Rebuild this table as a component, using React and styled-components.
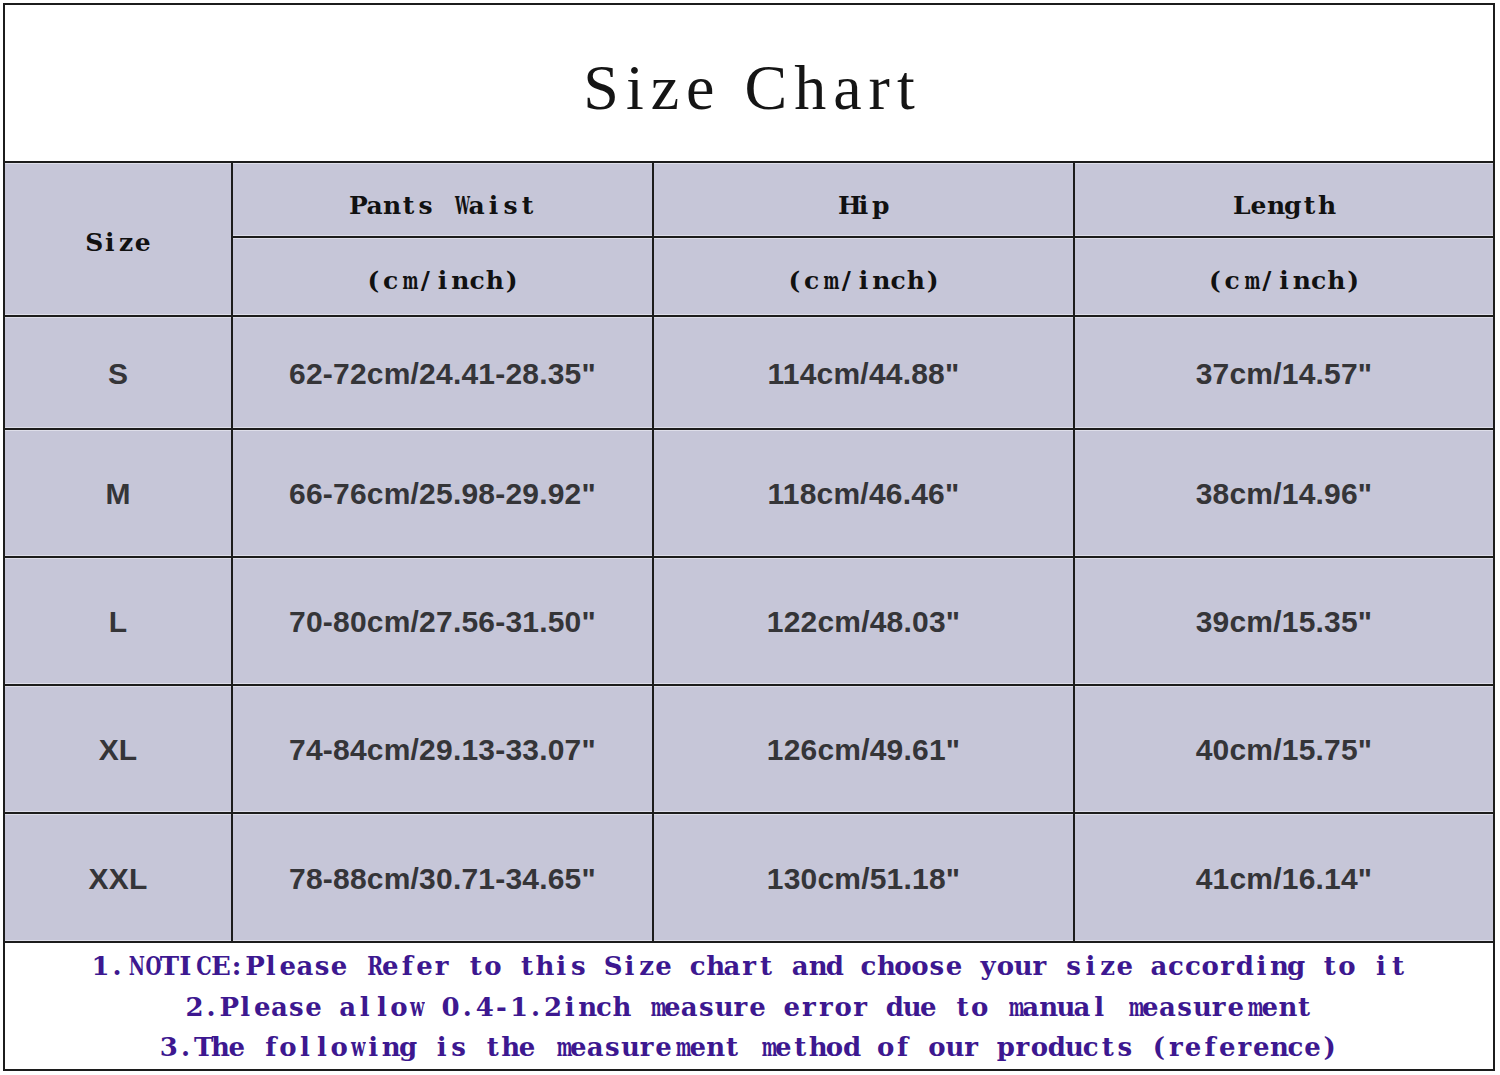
import React from "react";
import styled, { createGlobalStyle } from "styled-components";

const GlobalStyle = createGlobalStyle`
  html, body {
    margin: 0;
    padding: 0;
    background: #ffffff;
  }
`;

const Page = styled.div`
  padding: 3px 0 0 3px;
  width: 1500px;
  height: 1075px;
  box-sizing: border-box;
  background: #ffffff;
`;

const Sheet = styled.div`
  width: 1492px;
  height: 1068px;
  box-sizing: border-box;
  border: 2px solid #1c1c1c;
  display: flex;
  flex-direction: column;
`;

const TitleBar = styled.div`
  height: 158px;
  box-sizing: border-box;
  border-bottom: 2px solid #1c1c1c;
  display: flex;
  align-items: center;
  justify-content: center;
  padding-top: 10px;
`;

const Title = styled.h1`
  margin: 0 -7px 0 0;
  font-family: "Liberation Serif", "Times New Roman", serif;
  font-weight: 400;
  font-size: 64px;
  line-height: 1;
  letter-spacing: 7px;
  color: #151515;
`;

const Grid = styled.div`
  display: grid;
  grid-template-columns: 228px 421px 421px 1fr;
  grid-template-rows: 75px 79px 113px 128px 128px 128px 129px;
`;

const Cell = styled.div`
  box-sizing: border-box;
  background: #c6c6d8;
  border-bottom: 2px solid #1c1c1c;
  border-right: ${(p) => (p.$last ? "none" : "2px solid #1c1c1c")};
  box-shadow: inset 0 1px 0 #dedee9, inset 0 -1px 0 #dedee9;
  grid-row: ${(p) => p.$rows || "auto"};
  display: flex;
  align-items: center;
  justify-content: center;
  padding-top: ${(p) => p.$nudge || 0}px;
`;

const HeadText = styled.span`
  font-family: "DejaVu Serif", "Liberation Serif", serif;
  font-weight: 700;
  font-size: 25px;
  line-height: 1;
  color: #111111;
  white-space: nowrap;
`;

const DataText = styled.span`
  font-family: "Liberation Sans", Arial, sans-serif;
  font-weight: 700;
  font-size: 30px;
  line-height: 1;
  letter-spacing: 0.2px;
  color: #353538;
`;

// one fixed-width slot per character, like the half-width latin of the original font
const Ch = styled.span`
  display: inline-block;
  width: ${(p) => p.$w}px;
  text-align: center;
  transform: scaleX(${(p) => p.$sx});
`;

const Footer = styled.div`
  flex: 1;
  padding-top: 3px;
  display: flex;
  flex-direction: column;
  align-items: center;
`;

const Note = styled.div`
  font-family: "DejaVu Serif", "Liberation Serif", serif;
  font-weight: 700;
  font-size: 26px;
  line-height: 40.5px;
  color: #3d1890;
  white-space: nowrap;
`;

// rough advance widths (em) of the wide glyphs, squeezed into the slot
const wide = { m: 1.05, w: 0.92, M: 1.05, W: 1.16, N: 0.88, R: 0.81, C: 0.8, O: 0.85 };

function Spaced({ text, w, size }) {
  return [...text].map((c, i) => {
    const adv = wide[c];
    const sx = adv ? Math.min(1, (w - 1.5) / (adv * size)) : 1;
    return (
      <Ch key={i} $w={w} $sx={sx.toFixed(3)}>
        {c === " " ? "\u00a0" : c}
      </Ch>
    );
  });
}

const rows = [
  ["S", "62-72cm/24.41-28.35\"", "114cm/44.88\"", "37cm/14.57\""],
  ["M", "66-76cm/25.98-29.92\"", "118cm/46.46\"", "38cm/14.96\""],
  ["L", "70-80cm/27.56-31.50\"", "122cm/48.03\"", "39cm/15.35\""],
  ["XL", "74-84cm/29.13-33.07\"", "126cm/49.61\"", "40cm/15.75\""],
  ["XXL", "78-88cm/30.71-34.65\"", "130cm/51.18\"", "41cm/16.14\""],
];

const notes = [
  "1.NOTICE:Please Refer to this Size chart and choose your size according to it",
  "2.Please allow 0.4-1.2inch measure error due to manual measurement",
  "3.The following is the measurement method of our products (reference)",
];

export default function App() {
  return (
    <Page>
      <GlobalStyle />
      <Sheet>
        <TitleBar>
          <Title>Size Chart</Title>
        </TitleBar>
        <Grid>
          <Cell $rows="span 2" $nudge={7}>
            <HeadText>
              <Spaced text="Size" w={16.4} size={25} />
            </HeadText>
          </Cell>
          {["Pants Waist", "Hip", "Length"].map((h, i) => (
            <Cell key={h} $last={i === 2} $nudge={12}>
              <HeadText>
                <Spaced text={h} w={17} size={25} />
              </HeadText>
            </Cell>
          ))}
          {[0, 1, 2].map((i) => (
            <Cell key={"u" + i} $last={i === 2} $nudge={8}>
              <HeadText>
                <Spaced text="(cm/inch)" w={17.3} size={25} />
              </HeadText>
            </Cell>
          ))}
          {rows.map((r) =>
            r.map((v, i) => (
              <Cell key={r[0] + i} $last={i === 3} $nudge={2}>
                <DataText>{v}</DataText>
              </Cell>
            ))
          )}
        </Grid>
        <Footer>
          {notes.map((n) => (
            <Note key={n}>
              <Spaced text={n} w={17.08} size={26} />
            </Note>
          ))}
        </Footer>
      </Sheet>
    </Page>
  );
}
